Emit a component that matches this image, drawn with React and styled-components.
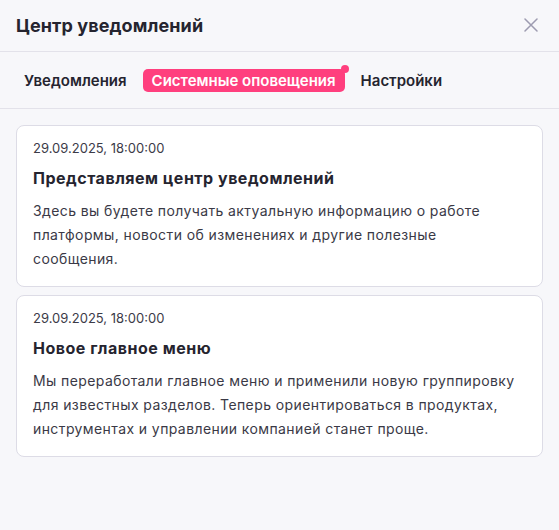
import styled, { createGlobalStyle } from "styled-components";

const GlobalStyle = createGlobalStyle`
  body {
    margin: 0;
    background: #f7f7fa;
    font-family: Inter, "Noto Sans", sans-serif;
    color: #25242f;
  }
`;

const Panel = styled.div`
  width: 559px;
  height: 530px;
  background: #f7f7fa;
  display: flex;
  flex-direction: column;
`;

const Header = styled.div`
  height: 51px;
  display: flex;
  align-items: center;
  justify-content: space-between;
  padding: 0 20px 0 16px;
  border-bottom: 1px solid #e3e2ea;
`;

const Title = styled.h2`
  margin: 0;
  font-size: 18px;
  font-weight: 700;
  color: #25242f;
  letter-spacing: 0.1px;
`;

const CloseButton = styled.button`
  border: 0;
  background: none;
  padding: 0;
  width: 16px;
  height: 16px;
  display: flex;
  align-items: center;
  justify-content: center;
  margin-bottom: 2px;
  cursor: pointer;
`;

const Tabs = styled.div`
  display: flex;
  align-items: center;
  gap: 8px;
  padding: 16px 16px;
  height: 24px;
  border-bottom: 1px solid #e3e2ea;
`;

const Tab = styled.div`
  position: relative;
  font-size: 15px;
  font-weight: 600;
  line-height: 23px;
  padding: 0 ${(p) => (p.$active ? "9px" : "8px")};
  border-radius: 5px;
  color: ${(p) => (p.$active ? "#fff" : "#25242f")};
  background: ${(p) => (p.$active ? "#ff3f7e" : "transparent")};
`;

const Dot = styled.span`
  position: absolute;
  top: -4px;
  right: -4px;
  width: 8px;
  height: 8px;
  border-radius: 50%;
  background: #ff3f7e;
`;

const List = styled.div`
  display: flex;
  flex-direction: column;
  gap: 8px;
  padding: 16px;
`;

const Card = styled.div`
  background: #fff;
  border: 1px solid #dddce6;
  border-radius: 8px;
  padding: 14px 16px 15px;
`;

const Date = styled.div`
  font-size: 13px;
  line-height: 16px;
  color: #3c3b48;
`;

const CardTitle = styled.div`
  margin-top: 11px;
  font-size: 16px;
  font-weight: 700;
  line-height: 22px;
  letter-spacing: 0.5px;
  color: #25242f;
`;

const Text = styled.p`
  margin: 10px 0 0;
  font-size: 14px;
  line-height: 24px;
  letter-spacing: 0.4px;
  color: #3a3946;
`;

const items = [
  {
    date: "29.09.2025, 18:00:00",
    title: "Представляем центр уведомлений",
    text: "Здесь вы будете получать актуальную информацию о работе платформы, новости об изменениях и другие полезные сообщения.",
  },
  {
    date: "29.09.2025, 18:00:00",
    title: "Новое главное меню",
    text: "Мы переработали главное меню и применили новую группировку для известных разделов. Теперь ориентироваться в продуктах, инструментах и управлении компанией станет проще.",
  },
];

export default function App() {
  return (
    <>
      <GlobalStyle />
      <Panel>
        <Header>
          <Title>Центр уведомлений</Title>
          <CloseButton aria-label="Закрыть">
            <svg width="14" height="14" viewBox="0 0 14 14">
              <path d="M1 1L13 13M13 1L1 13" stroke="#9d9bb0" strokeWidth="1.5" strokeLinecap="round" />
            </svg>
          </CloseButton>
        </Header>
        <Tabs>
          <Tab>Уведомления</Tab>
          <Tab $active>
            Системные оповещения
            <Dot />
          </Tab>
          <Tab>Настройки</Tab>
        </Tabs>
        <List>
          {items.map((it, i) => (
            <Card key={i}>
              <Date>{it.date}</Date>
              <CardTitle>{it.title}</CardTitle>
              <Text>{it.text}</Text>
            </Card>
          ))}
        </List>
      </Panel>
    </>
  );
}
